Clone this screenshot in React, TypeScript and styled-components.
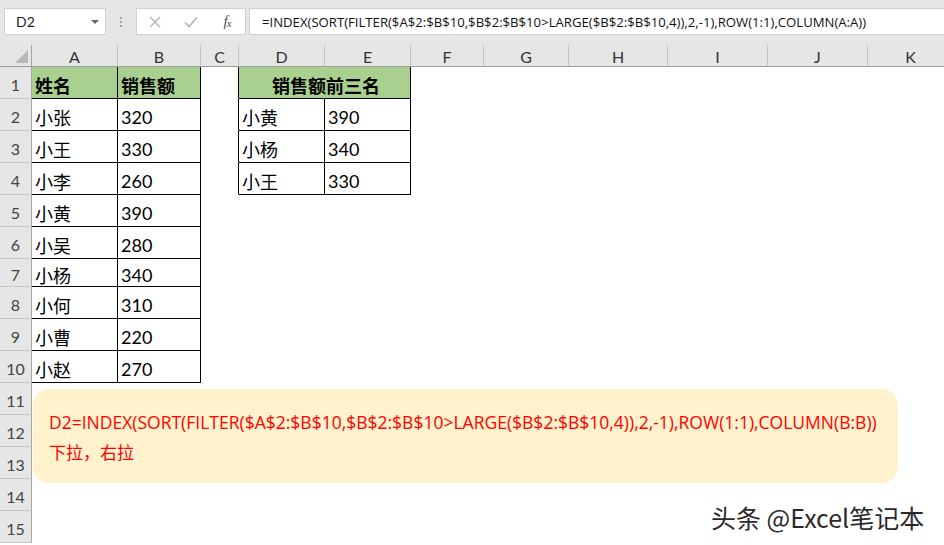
import React from 'react';
import styled, { createGlobalStyle } from 'styled-components';

const GlobalStyle = createGlobalStyle`
  html, body {
    margin: 0;
    padding: 0;
    background: #fff;
    overflow: hidden;
  }
  body {
    font-family: Lato, "Noto Sans CJK SC", sans-serif;
  }
`;

const COLS = ['A', 'B', 'C', 'D', 'E', 'F', 'G', 'H', 'I', 'J', 'K'];
const COL_WIDTHS = [86, 83, 38, 86, 86, 73, 85, 99, 100, 100, 86];
const ROW_HEIGHTS = [32, 32, 32, 32, 32, 32, 28, 32, 32, 32, 32, 32, 32, 32, 32];

const salesData: [string, string][] = [
  ['姓名', '销售额'],
  ['小张', '320'],
  ['小王', '330'],
  ['小李', '260'],
  ['小黄', '390'],
  ['小吴', '280'],
  ['小杨', '340'],
  ['小何', '310'],
  ['小曹', '220'],
  ['小赵', '270'],
];

const topThree: [string, string][] = [
  ['小黄', '390'],
  ['小杨', '340'],
  ['小王', '330'],
];

const FORMULA =
  '=INDEX(SORT(FILTER($A$2:$B$10,$B$2:$B$10>LARGE($B$2:$B$10,4)),2,-1),ROW(1:1),COLUMN(A:A))';
const NOTE_FORMULA =
  'D2=INDEX(SORT(FILTER($A$2:$B$10,$B$2:$B$10>LARGE($B$2:$B$10,4)),2,-1),ROW(1:1),COLUMN(B:B))';

const App: React.FC = () => {
  const cells: React.ReactNode[] = [];

  ROW_HEIGHTS.forEach((_, i) => {
    const row = i + 1;
    cells.push(<RowHead key={`r${row}`}>{row}</RowHead>);

    COLS.forEach(col => {
      const key = `${col}${row}`;
      if (col === 'A' || col === 'B') {
        const entry = salesData[row - 1];
        if (entry) {
          cells.push(
            <Cell key={key} $head={row === 1} $boxed>
              {col === 'A' ? entry[0] : entry[1]}
            </Cell>
          );
          return;
        }
      }
      if (col === 'C' && row <= 4) {
        cells.push(<Cell key={key} $edge />);
        return;
      }
      if (col === 'D' && row === 1) {
        cells.push(
          <Cell key={key} $head $boxed $center $span={2}>
            销售额前三名
          </Cell>
        );
        return;
      }
      if (col === 'E' && row === 1) return;
      if ((col === 'D' || col === 'E') && row <= 4) {
        const entry = topThree[row - 2];
        cells.push(
          <Cell key={key} $boxed>
            {col === 'D' ? entry[0] : entry[1]}
          </Cell>
        );
        return;
      }
      cells.push(<Cell key={key} />);
    });
  });

  return (
    <Page>
      <GlobalStyle />
      <FormulaBar>
        <NameBox>
          <span>D2</span>
          <DropArrow />
        </NameBox>
        <Grip>
          <i />
          <i />
          <i />
        </Grip>
        <ActionBox>
          <ActionSlot>
            <svg width="12" height="12" viewBox="0 0 12 12">
              <path d="M1 1 L11 11 M11 1 L1 11" stroke="#b3b3b3" strokeWidth="1.3" fill="none" />
            </svg>
          </ActionSlot>
          <ActionSlot>
            <svg width="14" height="12" viewBox="0 0 14 12">
              <path d="M1 6.5 L5 10.5 L13 1.5" stroke="#b3b3b3" strokeWidth="1.6" fill="none" />
            </svg>
          </ActionSlot>
          <ActionSlot>
            <FxLabel>
              f<sub>x</sub>
            </FxLabel>
          </ActionSlot>
        </ActionBox>
        <FormulaInput>{FORMULA}</FormulaInput>
      </FormulaBar>

      <SheetArea>
        <Sheet>
          <Corner />
          {COLS.map(col => (
            <ColHead key={col}>{col}</ColHead>
          ))}
          {cells}
        </Sheet>

        <NoteBox>
          <NoteLine>{NOTE_FORMULA}</NoteLine>
          <NoteLine $cjk>下拉，右拉</NoteLine>
        </NoteBox>

        <Watermark>头条 @Excel笔记本</Watermark>
      </SheetArea>
    </Page>
  );
};

const Page = styled.div`
  position: relative;
  width: 944px;
  height: 545px;
  overflow: hidden;
  background: #fff;
`;

const FormulaBar = styled.div`
  display: flex;
  align-items: flex-start;
  box-sizing: border-box;
  height: 45px;
  padding: 8px 0 0 4px;
  background: #e6e6e6;
`;

const NameBox = styled.div`
  display: flex;
  align-items: center;
  justify-content: space-between;
  box-sizing: border-box;
  width: 102px;
  height: 27px;
  padding: 0 6px 0 11px;
  background: #fff;
  border: 1px solid #d0d0d0;
  font: 14px Lato, sans-serif;
  color: #222;
`;

const DropArrow = styled.span`
  width: 0;
  height: 0;
  border-left: 4px solid transparent;
  border-right: 4px solid transparent;
  border-top: 4px solid #666;
`;

const Grip = styled.div`
  display: flex;
  flex-direction: column;
  align-items: center;
  justify-content: center;
  gap: 2px;
  width: 30px;
  height: 27px;

  i {
    display: block;
    width: 2px;
    height: 2px;
    background: #a6a6a6;
  }
`;

const ActionBox = styled.div`
  display: flex;
  box-sizing: border-box;
  width: 110px;
  height: 27px;
  background: #fff;
  border: 1px solid #d0d0d0;
`;

const ActionSlot = styled.div`
  display: flex;
  align-items: center;
  justify-content: center;
  width: 36px;
`;

const FxLabel = styled.span`
  font: italic 15px "Liberation Serif", serif;
  color: #555;
  letter-spacing: -1px;

  sub {
    font-size: 11px;
    vertical-align: -1px;
  }
`;

const FormulaInput = styled.div`
  display: flex;
  align-items: center;
  box-sizing: border-box;
  flex: 1;
  height: 27px;
  margin-left: 3px;
  padding-left: 12px;
  background: #fff;
  border: 1px solid #d0d0d0;
  border-right: none;
  font: 13.15px "Open Sans", sans-serif;
  color: #111;
  white-space: nowrap;
  overflow: hidden;
`;

const SheetArea = styled.div`
  position: relative;
`;

const Sheet = styled.div`
  display: grid;
  grid-template-columns: 32px ${COL_WIDTHS.map(w => `${w}px`).join(' ')};
  grid-template-rows: 22px ${ROW_HEIGHTS.map(h => `${h}px`).join(' ')} 40px;
`;

const Corner = styled.div`
  position: relative;
  box-sizing: border-box;
  background: #e6e6e6;
  border-right: 1px solid #a6a6a6;
  border-bottom: 1px solid #9b9b9b;

  &::after {
    content: '';
    position: absolute;
    right: 3px;
    bottom: 3px;
    width: 0;
    height: 0;
    border-left: 13px solid transparent;
    border-bottom: 13px solid #b8b8b8;
  }
`;

const ColHead = styled.div`
  display: flex;
  align-items: center;
  justify-content: center;
  box-sizing: border-box;
  padding-top: 2px;
  background: #e6e6e6;
  border-right: 1px solid #c2c2c2;
  border-bottom: 1px solid #9b9b9b;
  font: 16px Lato, sans-serif;
  color: #333;
`;

const RowHead = styled.div`
  display: flex;
  align-items: center;
  justify-content: center;
  box-sizing: border-box;
  padding-top: 3px;
  background: #e6e6e6;
  border-right: 1px solid #a6a6a6;
  border-bottom: 1px solid #c8c8c8;
  font: 16px Lato, sans-serif;
  color: #444;
`;

const Cell = styled.div<{
  $head?: boolean;
  $boxed?: boolean;
  $edge?: boolean;
  $center?: boolean;
  $span?: number;
}>`
  display: flex;
  align-items: center;
  justify-content: ${p => (p.$center ? 'center' : 'flex-start')};
  box-sizing: border-box;
  grid-column: ${p => (p.$span ? `span ${p.$span}` : 'auto')};
  padding: 4px 0 0 3px;
  background: ${p => (p.$head ? '#a9d08e' : '#fff')};
  border-right: 1px solid ${p => (p.$boxed || p.$edge ? '#000' : 'transparent')};
  border-bottom: 1px solid ${p => (p.$boxed ? '#000' : 'transparent')};
  font-family: Lato, "Noto Sans CJK SC", sans-serif;
  font-size: 18px;
  font-weight: ${p => (p.$head ? 700 : 400)};
  color: #000;
  white-space: nowrap;
  overflow: hidden;
`;

const NoteBox = styled.div`
  position: absolute;
  left: 33px;
  top: 344px;
  box-sizing: border-box;
  width: 865px;
  height: 94px;
  padding: 18px 0 0 16px;
  background: #fff2cc;
  border-radius: 16px;
`;

const NoteLine = styled.div<{ $cjk?: boolean }>`
  height: 30px;
  line-height: 30px;
  font-family: ${p => (p.$cjk ? '"Noto Sans CJK SC"' : '"Open Sans", "Noto Sans CJK SC"')}, sans-serif;
  font-size: ${p => (p.$cjk ? '17px' : '17.5px')};
  color: #ff0000;
  white-space: nowrap;
`;

const Watermark = styled.div`
  position: absolute;
  left: 711px;
  top: 454px;
  font-family: "Noto Sans CJK SC", sans-serif;
  font-size: 25px;
  line-height: 36px;
  color: #2a2a2a;
  white-space: nowrap;
  text-shadow: 1px 1px 0 #fff, -1px -1px 0 #fff, 1px -1px 0 #fff, -1px 1px 0 #fff;
`;

export default App;
